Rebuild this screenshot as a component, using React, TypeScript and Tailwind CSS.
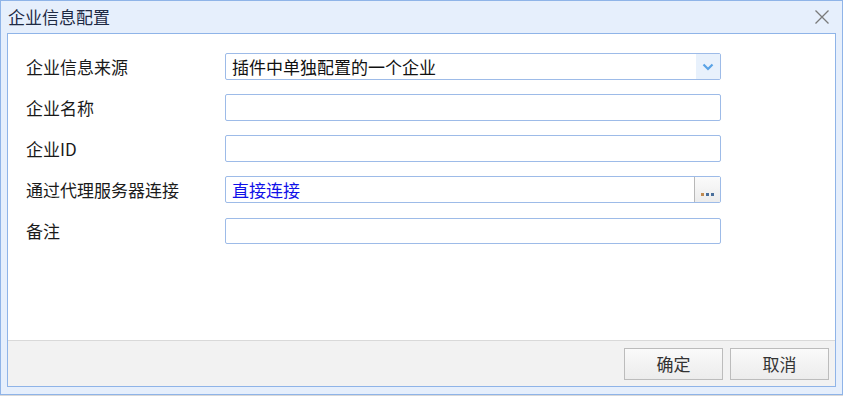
import React, { useState } from "react";

const font = { fontFamily: '"Microsoft YaHei", "Noto Sans CJK SC", sans-serif' };

const Field: React.FC<{ label: string; children: React.ReactNode }> = ({ label, children }) => (
  <div className="flex items-center h-[27px]">
    <div className="w-[199px] text-[17px] text-[#1a1a1a]">{label}</div>
    {children}
  </div>
);

const App: React.FC = () => {
  const [name, setName] = useState<string>("");
  const [corpId, setCorpId] = useState<string>("");
  const [remark, setRemark] = useState<string>("");

  return (
    <div className="w-[843px] h-[396px] bg-white" style={font}>
      <div className="w-[843px] h-[395px] border border-[#8fb4e8] bg-[#e6effc] flex flex-col shadow-[0_1px_1px_rgba(0,0,0,0.15)]">
        {/* title bar */}
        <div className="h-[32px] flex items-center justify-between pl-[7px] pr-[12px]">
          <span className="text-[17px] text-[#1e2a44]">企业信息配置</span>
          <svg width="16" height="16" viewBox="0 0 16 16" className="mt-[-1px]">
            <path d="M1.5 1.5 L14.5 14.5 M14.5 1.5 L1.5 14.5" stroke="#7a7a7a" strokeWidth="1.3" />
          </svg>
        </div>

        {/* content */}
        <div className="mx-[6px] mb-[7px] flex-1 border border-[#8fb4e8] bg-white flex flex-col">
          <div className="flex-1 flex flex-col gap-[14px] pt-[19px] pl-[18px]">
            <Field label="企业信息来源">
              <div className="w-[496px] h-[27px] border border-[#9dbbe8] rounded-[2px] flex items-center">
                <span className="flex-1 pl-[6px] text-[17px] text-[#111]">插件中单独配置的一个企业</span>
                <div className="w-[24px] h-full bg-[#e8f1fc] flex items-center justify-center">
                  <svg width="12" height="8" viewBox="0 0 12 8">
                    <path d="M1.5 1.5 L6 6 L10.5 1.5" fill="none" stroke="#5aa3e6" strokeWidth="2.2" />
                  </svg>
                </div>
              </div>
            </Field>
            <Field label="企业名称">
              <input
                value={name}
                onChange={(e) => setName(e.target.value)}
                className="w-[496px] h-[27px] border border-[#9dbbe8] rounded-[2px] px-[6px] text-[17px] outline-none"
              />
            </Field>
            <Field label="企业ID">
              <input
                value={corpId}
                onChange={(e) => setCorpId(e.target.value)}
                className="w-[496px] h-[27px] border border-[#9dbbe8] rounded-[2px] px-[6px] text-[17px] outline-none"
              />
            </Field>
            <Field label="通过代理服务器连接">
              <div className="w-[496px] h-[27px] border border-[#9dbbe8] rounded-[2px] flex items-center">
                <span className="flex-1 pl-[6px] text-[17px] text-[#1010e8]">直接连接</span>
                <div className="w-[26px] h-full border-l border-[#b8b8b8] bg-gradient-to-b from-[#fbfbfb] to-[#ececec] flex items-end justify-center pb-[6px] gap-[2px]">
                  <span className="w-[3px] h-[3px] bg-[#c08a50]" />
                  <span className="w-[3px] h-[3px] bg-[#4a6f9c]" />
                  <span className="w-[3px] h-[3px] bg-[#4a6f9c]" />
                </div>
              </div>
            </Field>
            <Field label="备注">
              <input
                value={remark}
                onChange={(e) => setRemark(e.target.value)}
                className="w-[496px] h-[26px] border border-[#9dbbe8] rounded-[2px] px-[6px] text-[17px] outline-none"
              />
            </Field>
          </div>

          {/* footer */}
          <div className="h-[46px] border-t border-[#d9d9d9] bg-[#f2f2f2] flex items-center justify-end gap-[7px] pr-[6px]">
            <button className="w-[99px] h-[32px] border border-[#bcbcbc] bg-gradient-to-b from-[#fafafa] to-[#ececec] text-[17px] text-[#333]">
              确定
            </button>
            <button className="w-[99px] h-[32px] border border-[#bcbcbc] bg-gradient-to-b from-[#fafafa] to-[#ececec] text-[17px] text-[#333]">
              取消
            </button>
          </div>
        </div>
      </div>
    </div>
  );
};

export default App;
